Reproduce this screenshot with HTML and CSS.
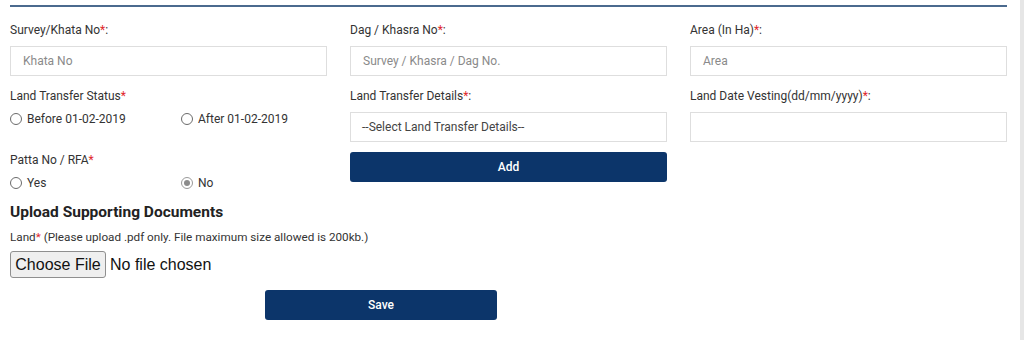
FILE: index.html
```html
<!DOCTYPE html>
<html>
<head>
<meta charset="utf-8">
<link rel="stylesheet" href="styles.css">
</head>
<body>
<div class="page">
  <div class="panel">
    <div class="grid">
      <div class="field">
        <label class="lbl">Survey/Khata No<span class="req">*</span>:</label>
        <div class="input"><span class="ph">Khata No</span></div>
      </div>
      <div class="field">
        <label class="lbl">Dag / Khasra No<span class="req">*</span>:</label>
        <div class="input"><span class="ph">Survey / Khasra / Dag No.</span></div>
      </div>
      <div class="field">
        <label class="lbl">Area (In Ha)<span class="req">*</span>:</label>
        <div class="input"><span class="ph">Area</span></div>
      </div>

      <div class="field">
        <label class="lbl">Land Transfer Status<span class="req">*</span></label>
        <div class="radios">
          <span class="radio"><span class="dot"></span>Before 01-02-2019</span>
          <span class="radio"><span class="dot"></span>After 01-02-2019</span>
        </div>
      </div>
      <div class="field">
        <label class="lbl">Land Transfer Details<span class="req">*</span>:</label>
        <div class="input"><span class="sel">--Select Land Transfer Details--</span></div>
      </div>
      <div class="field">
        <label class="lbl">Land Date Vesting(dd/mm/yyyy)<span class="req">*</span>:</label>
        <div class="input"></div>
      </div>

      <div class="field row3">
        <label class="lbl">Patta No / RFA<span class="req">*</span></label>
        <div class="radios">
          <span class="radio"><span class="dot"></span>Yes</span>
          <span class="radio"><span class="dot on"></span>No</span>
        </div>
      </div>
      <div class="field addcell">
        <button class="btn">Add</button>
      </div>
      <div class="field"></div>
    </div>

    <h3 class="upl">Upload Supporting Documents</h3>
    <p class="note">Land<span class="req">*</span> (Please upload .pdf only. File maximum size allowed is 200kb.)</p>
    <div class="file">
      <span class="fbtn">Choose File</span><span class="fname">No file chosen</span>
    </div>
    <div class="saverow">
      <button class="btn save">Save</button>
    </div>
  </div>
  <div class="scroll"></div>
</div>
</body>
</html>
```

FILE: styles.css
```css
* { box-sizing: border-box; }
html, body { margin: 0; padding: 0; background: #fff; }
body {
  font-family: Roboto, "Liberation Sans", Arial, sans-serif;
  color: #333;
  width: 1024px;
  height: 340px;
  overflow: hidden;
}
.page { display: flex; height: 340px; }
.panel {
  width: 997px;
  margin-left: 10px;
  border-top: 2px solid #4b6a8e;
  margin-top: 5px;
}
.scroll {
  margin-left: auto;
  width: 4px;
  background: #e6e6e6;
  height: 340px;
}
.grid {
  display: grid;
  grid-template-columns: 317px 317px 317px;
  column-gap: 23px;
  padding-top: 16px;
}
.field { display: flex; flex-direction: column; }
.lbl {
  font-size: 12px;
  line-height: 14px;
  color: #333;
  height: 14px;
}
.req { color: #e0262b; }
.input {
  margin-top: 9px;
  height: 30px;
  border: 1px solid #dedede;
  background: #fff;
  display: flex;
  align-items: center;
  padding-left: 12px;
  font-size: 12px;
  margin-bottom: 13px;
}
.ph { color: #8a8a8a; }
.sel { color: #444; margin-left: -1px; }
.radios {
  display: grid;
  grid-template-columns: 171px 1fr;
  margin-top: 9px;
}
.radio {
  display: flex;
  align-items: center;
  font-size: 12px;
  color: #333;
  height: 14px;
}
.dot {
  width: 12px;
  height: 12px;
  border-radius: 50%;
  border: 1px solid #6b6b6b;
  margin-right: 5px;
  background: #fff;
  position: relative;
}
.dot.on { border-color: #9a9a9a; }
.dot.on::after {
  content: "";
  position: absolute;
  left: 2px; top: 2px;
  width: 6px; height: 6px;
  border-radius: 50%;
  background: #8c8c8c;
}
.row3 { margin-top: -2px; }
.addcell { margin-top: -3px; }
.btn {
  background: #0c356a;
  color: #fff;
  border: 0;
  border-radius: 3px;
  height: 30px;
  width: 317px;
  font-family: Roboto, "Liberation Sans", Arial, sans-serif;
  font-size: 12px;
  font-weight: 500;
  padding: 0;
}
.upl {
  margin: 13px 0 0;
  font-size: 15.5px;
  line-height: 18px;
  font-weight: 700;
  color: #222;
}
.note {
  margin: 10px 0 0;
  font-size: 11.7px;
  line-height: 13px;
  color: #333;
}
.file {
  margin-top: 7px;
  display: flex;
  align-items: center;
  height: 27px;
}
.fbtn {
  height: 27px;
  width: 96px;
  display: flex;
  align-items: center;
  justify-content: center;
  background: #efefef;
  border: 1px solid #8f8f8f;
  border-radius: 3px;
  font-family: "Liberation Sans", Arial, sans-serif;
  font-size: 16px;
  color: #111;
}
.fname {
  margin-left: 4px;
  font-family: "Liberation Sans", Arial, sans-serif;
  font-size: 16px;
  color: #111;
}
.saverow { padding-left: 255px; margin-top: 12px; }
.save { width: 232px; }
```
